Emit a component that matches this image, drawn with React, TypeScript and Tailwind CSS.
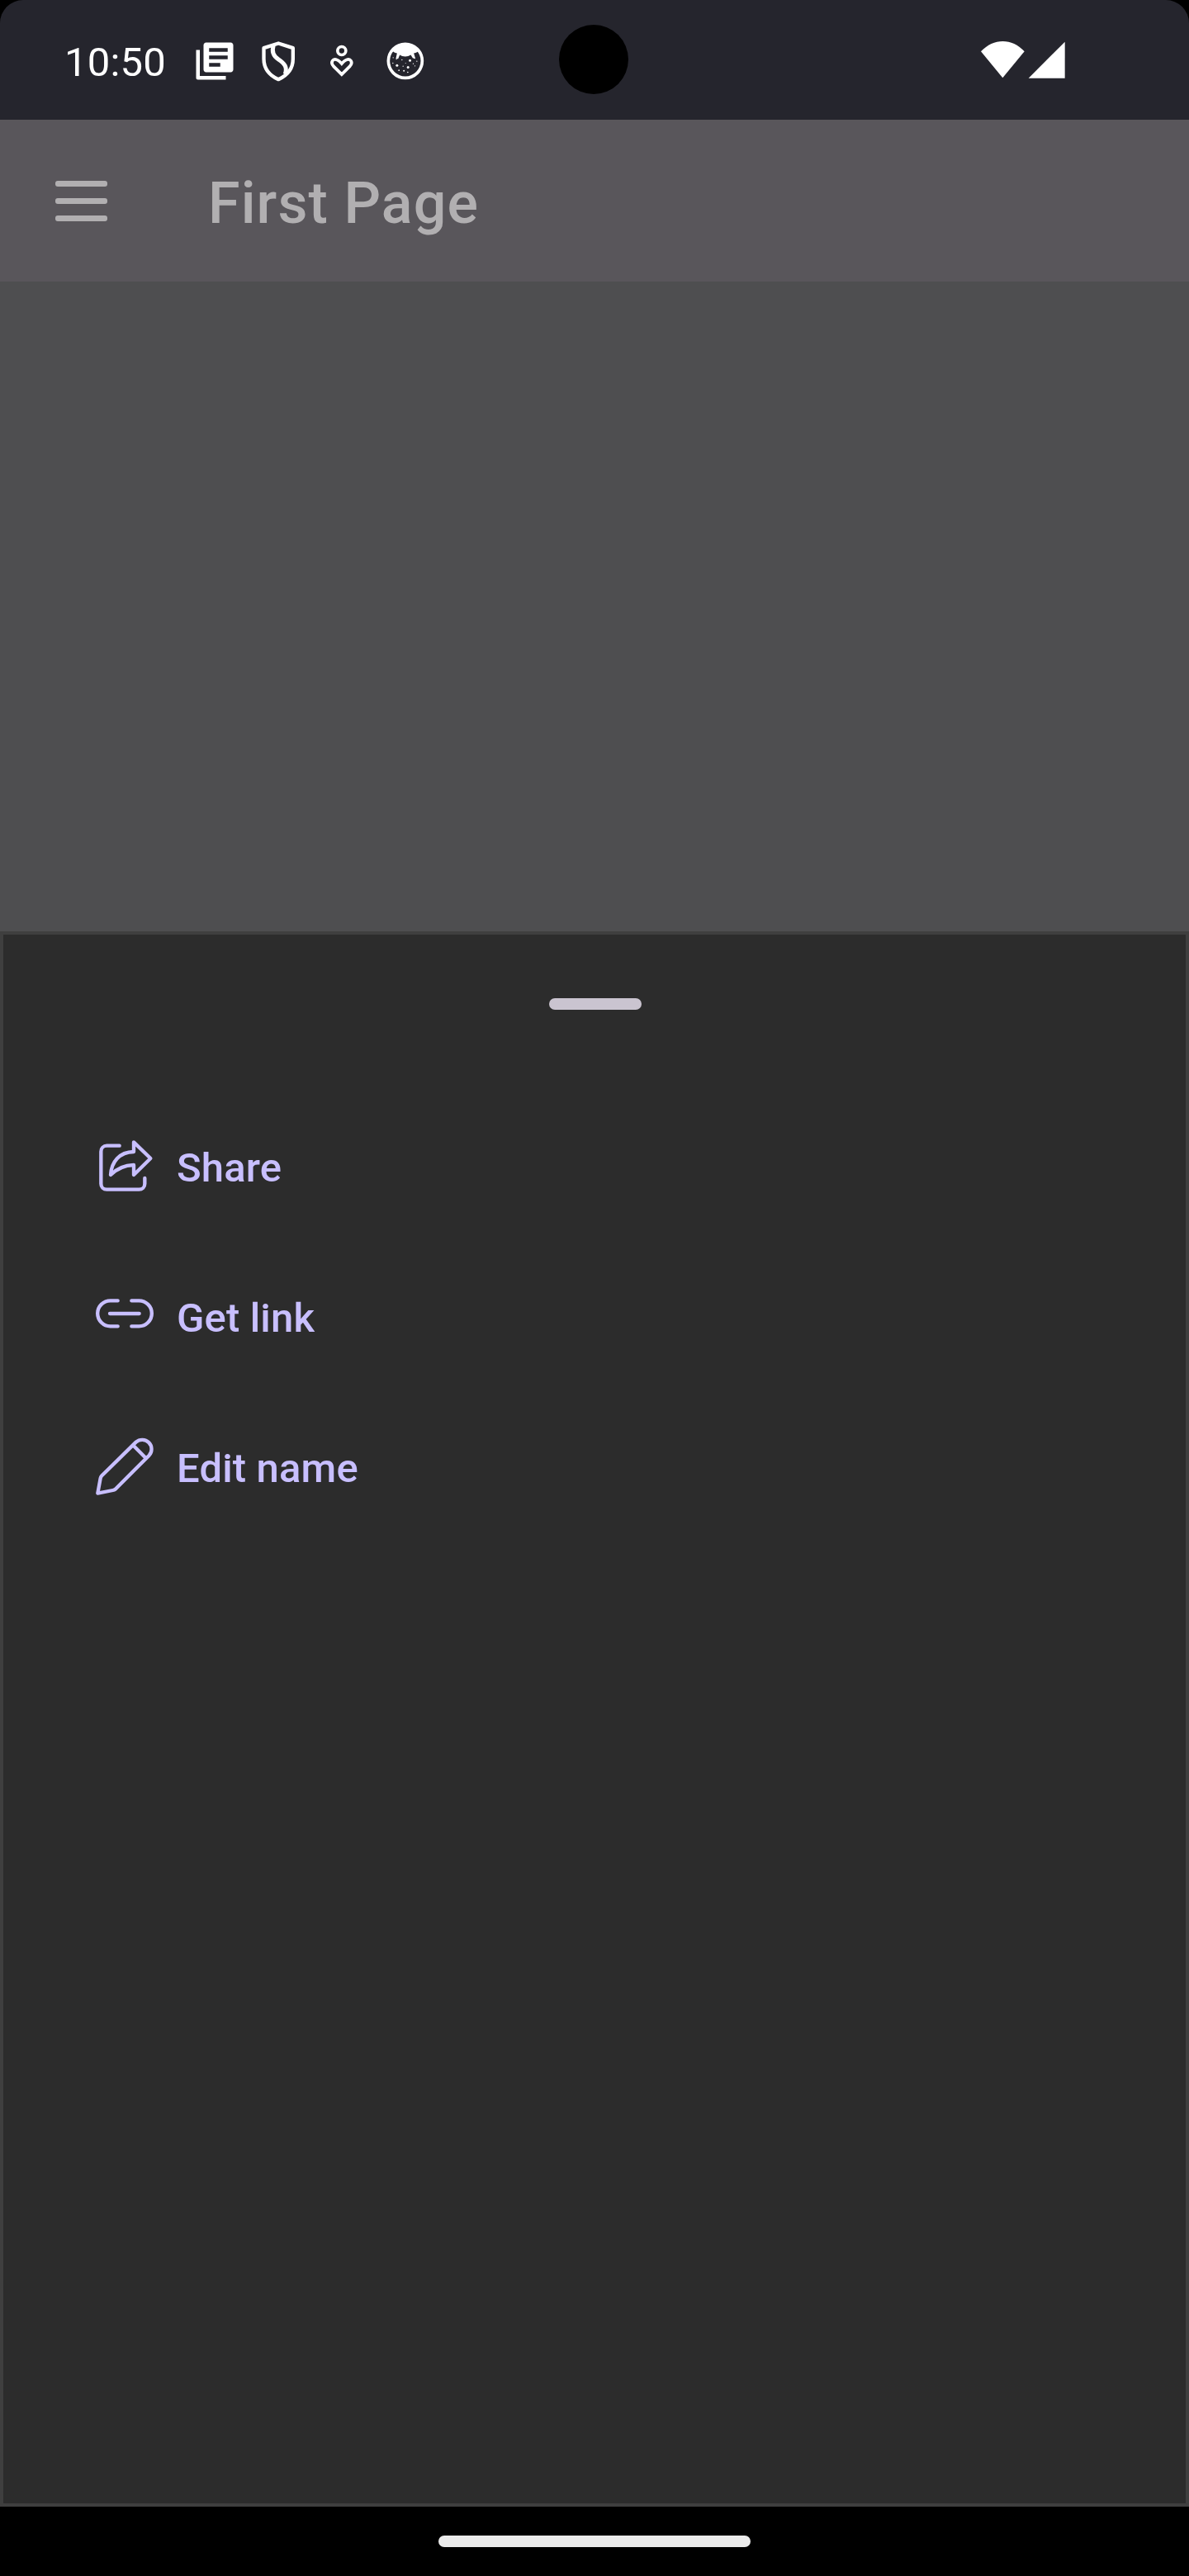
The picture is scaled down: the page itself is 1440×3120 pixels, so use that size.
import React from "react";

function LibraryIcon() {
  return (
    <svg className="size-[54px]" viewBox="0 0 24 24" fill="#fff">
      <path d="M4 6H2v15c0 .6.4 1 1 1h15v-2H4V6zm16.600-4H7.400C6.600 2 6 2.600 6 3.400v13.200c0 .8.6 1.400 1.400 1.400h13.200c.8 0 1.400-.6 1.400-1.400V3.400c0-.8-.6-1.400-1.400-1.400zM19 11H9V9h10v2zm-4 4H9v-2h6v2zm4-8H9V5h10v2z" />
    </svg>
  );
}

function ShieldIcon() {
  return (
    <svg className="size-[54px]" viewBox="268.5 49.5 162 162" fill="none" stroke="#fff" strokeWidth="13" strokeLinejoin="round">
      <path d="M350 66L403 83V122C403 156 383 182 350 197C317 182 297 156 297 122V83Z" />
      <path d="M332 74C325 96 332 112 350 124C372 139 384 152 374 178" strokeWidth="15" />
    </svg>
  );
}

function CareIcon() {
  return (
    <svg className="size-[54px]" viewBox="499.5 49.5 162 162" fill="none" stroke="#fff" strokeWidth="11">
      <circle cx="580" cy="93" r="15" />
      <path d="M580 179L550 149C537 134 549 121 561 125C569 127 574 133 580 140C586 133 591 127 599 125C611 121 623 134 610 149Z" />
    </svg>
  );
}

const dots = [
  [779, 123, 2], [767, 118, 2], [781, 146, 4.5], [799, 126, 2], [828, 128, 4.5], [853, 131, 2],
  [821, 153, 4.5], [803, 149, 2], [788, 164, 2.5], [806, 166, 3], [820, 171, 2.5], [846, 148, 2],
  [766, 138, 2], [840, 140, 2], [812, 138, 1.5], [843, 118, 2],
];

function CatIcon() {
  return (
    <svg className="size-[54px]" viewBox="730.5 49.5 162 162">
      <circle cx="811" cy="130" r="61.5" fill="none" stroke="#fff" strokeWidth="11" />
      <path fill="#fff" d="M764 91L775 79C796 62 826 62 847 79L860 91C857 98 851 101 842 102L848 122L838 119L831 108C825 112 818 114 811 114C804 114 796 112 791 108L785 122L777 121L781 102C772 101 767 98 764 91Z" />
      {dots.map(([x, y, r]) => (
        <circle key={`${x}-${y}`} cx={x} cy={y} r={r} fill="#fff" />
      ))}
    </svg>
  );
}

function StatusBar() {
  return (
    <div className="h-[145px] bg-black">
      <div className="relative flex h-full items-start rounded-t-[28px] bg-[#25252d] pl-[78px]">
        <span className="mt-[47px] w-[154.5px] text-[49px] leading-[57px] tracking-[0.2px] text-white">10:50</span>
        <div className="mt-[46.5px] flex gap-[23px]">
          <LibraryIcon />
          <ShieldIcon />
          <CareIcon />
          <CatIcon />
        </div>
        <div className="absolute top-[30px] left-[677px] size-[84px] rounded-full bg-black" />
        <svg className="mt-[50px] mr-[150px] ml-auto h-[45px] w-[102px]" viewBox="84 150 306 135" fill="#fff">
          <path d="M84 187C130 138 197 138 242 187L163 283Z" />
          <path d="M257 284L389 152V284Z" />
        </svg>
      </div>
    </div>
  );
}

function AppBar() {
  return (
    <header className="flex h-[196px] items-center bg-[#59565b] pl-[66.5px] text-[#b1afb1]">
      <div className="flex w-[63px] flex-col gap-[14px]">
        <div className="h-[7px] rounded-[3px] bg-[#b1afb1]" />
        <div className="h-[7px] rounded-[3px] bg-[#b1afb1]" />
        <div className="h-[7px] rounded-[3px] bg-[#b1afb1]" />
      </div>
      <h1 className="mt-[6px] ml-[122.5px] text-[70px] leading-[82px] font-medium tracking-[1.1px]">First Page</h1>
    </header>
  );
}

function ShareIcon() {
  return (
    <svg className="size-[84px]" viewBox="27 36 252 252" fill="none" stroke="#c8bfff" strokeWidth="13" strokeLinecap="round" strokeLinejoin="round">
      <path d="M134 83H88C76 83 67 92 67 104V221C67 233 76 242 88 242H205C217 242 226 233 226 221V201" />
      <path d="M186 70L247 129L186 189V153C150 154 124 167 102 189C105 142 133 106 186 105Z" />
    </svg>
  );
}

function LinkIcon() {
  return (
    <svg className="size-[84px]" viewBox="27 12 252 252" fill="none" stroke="#c8bfff" strokeWidth="13" strokeLinecap="round">
      <path d="M128 76H101A46.500 46.500 0 0 0 101 169H128M178 76H205A46.500 46.500 0 0 1 205 169H178M99 123H206" />
    </svg>
  );
}

function PencilIcon() {
  return (
    <svg className="size-[84px]" viewBox="27 48 252 252" fill="none" stroke="#c8bfff" strokeWidth="13" strokeLinejoin="round">
      <path d="M194 80A34 34 0 0 1 242 128L119 251Q115 254 110 255L55 266L65 211Q66 206 70 202ZM183 91L230 138" />
    </svg>
  );
}

const actions = [
  { label: "Share", icon: <ShareIcon /> },
  { label: "Get link", icon: <LinkIcon /> },
  { label: "Edit name", icon: <PencilIcon /> },
];

function BottomSheet() {
  return (
    <section className="flex h-[1908px] flex-col border-4 border-[#3f3f3f] bg-[#2c2c2c]">
      <div className="mt-[77px] ml-[661px] h-[14px] w-[112px] rounded-full bg-[#cac4d0]" />
      <ul className="mt-[100px] pl-[105px]">
        {actions.map((a) => (
          <li key={a.label} className="flex h-[182px] items-center">
            {a.icon}
            <span className="mt-[2px] ml-[21px] text-[49px] leading-[70px] font-medium tracking-[0.15px] text-[#c8bfff]">{a.label}</span>
          </li>
        ))}
      </ul>
    </section>
  );
}

export default function App() {
  return (
    <div className="flex h-[3120px] w-[1440px] flex-col overflow-hidden bg-black font-['Roboto',sans-serif]">
      <StatusBar />
      <AppBar />
      <main className="h-[787px] bg-[#4e4e50]" />
      <BottomSheet />
      <div className="flex h-[84px] justify-center pt-[35px]">
        <div className="h-[14px] w-[378px] rounded-full bg-[#ebebeb]" />
      </div>
    </div>
  );
}
